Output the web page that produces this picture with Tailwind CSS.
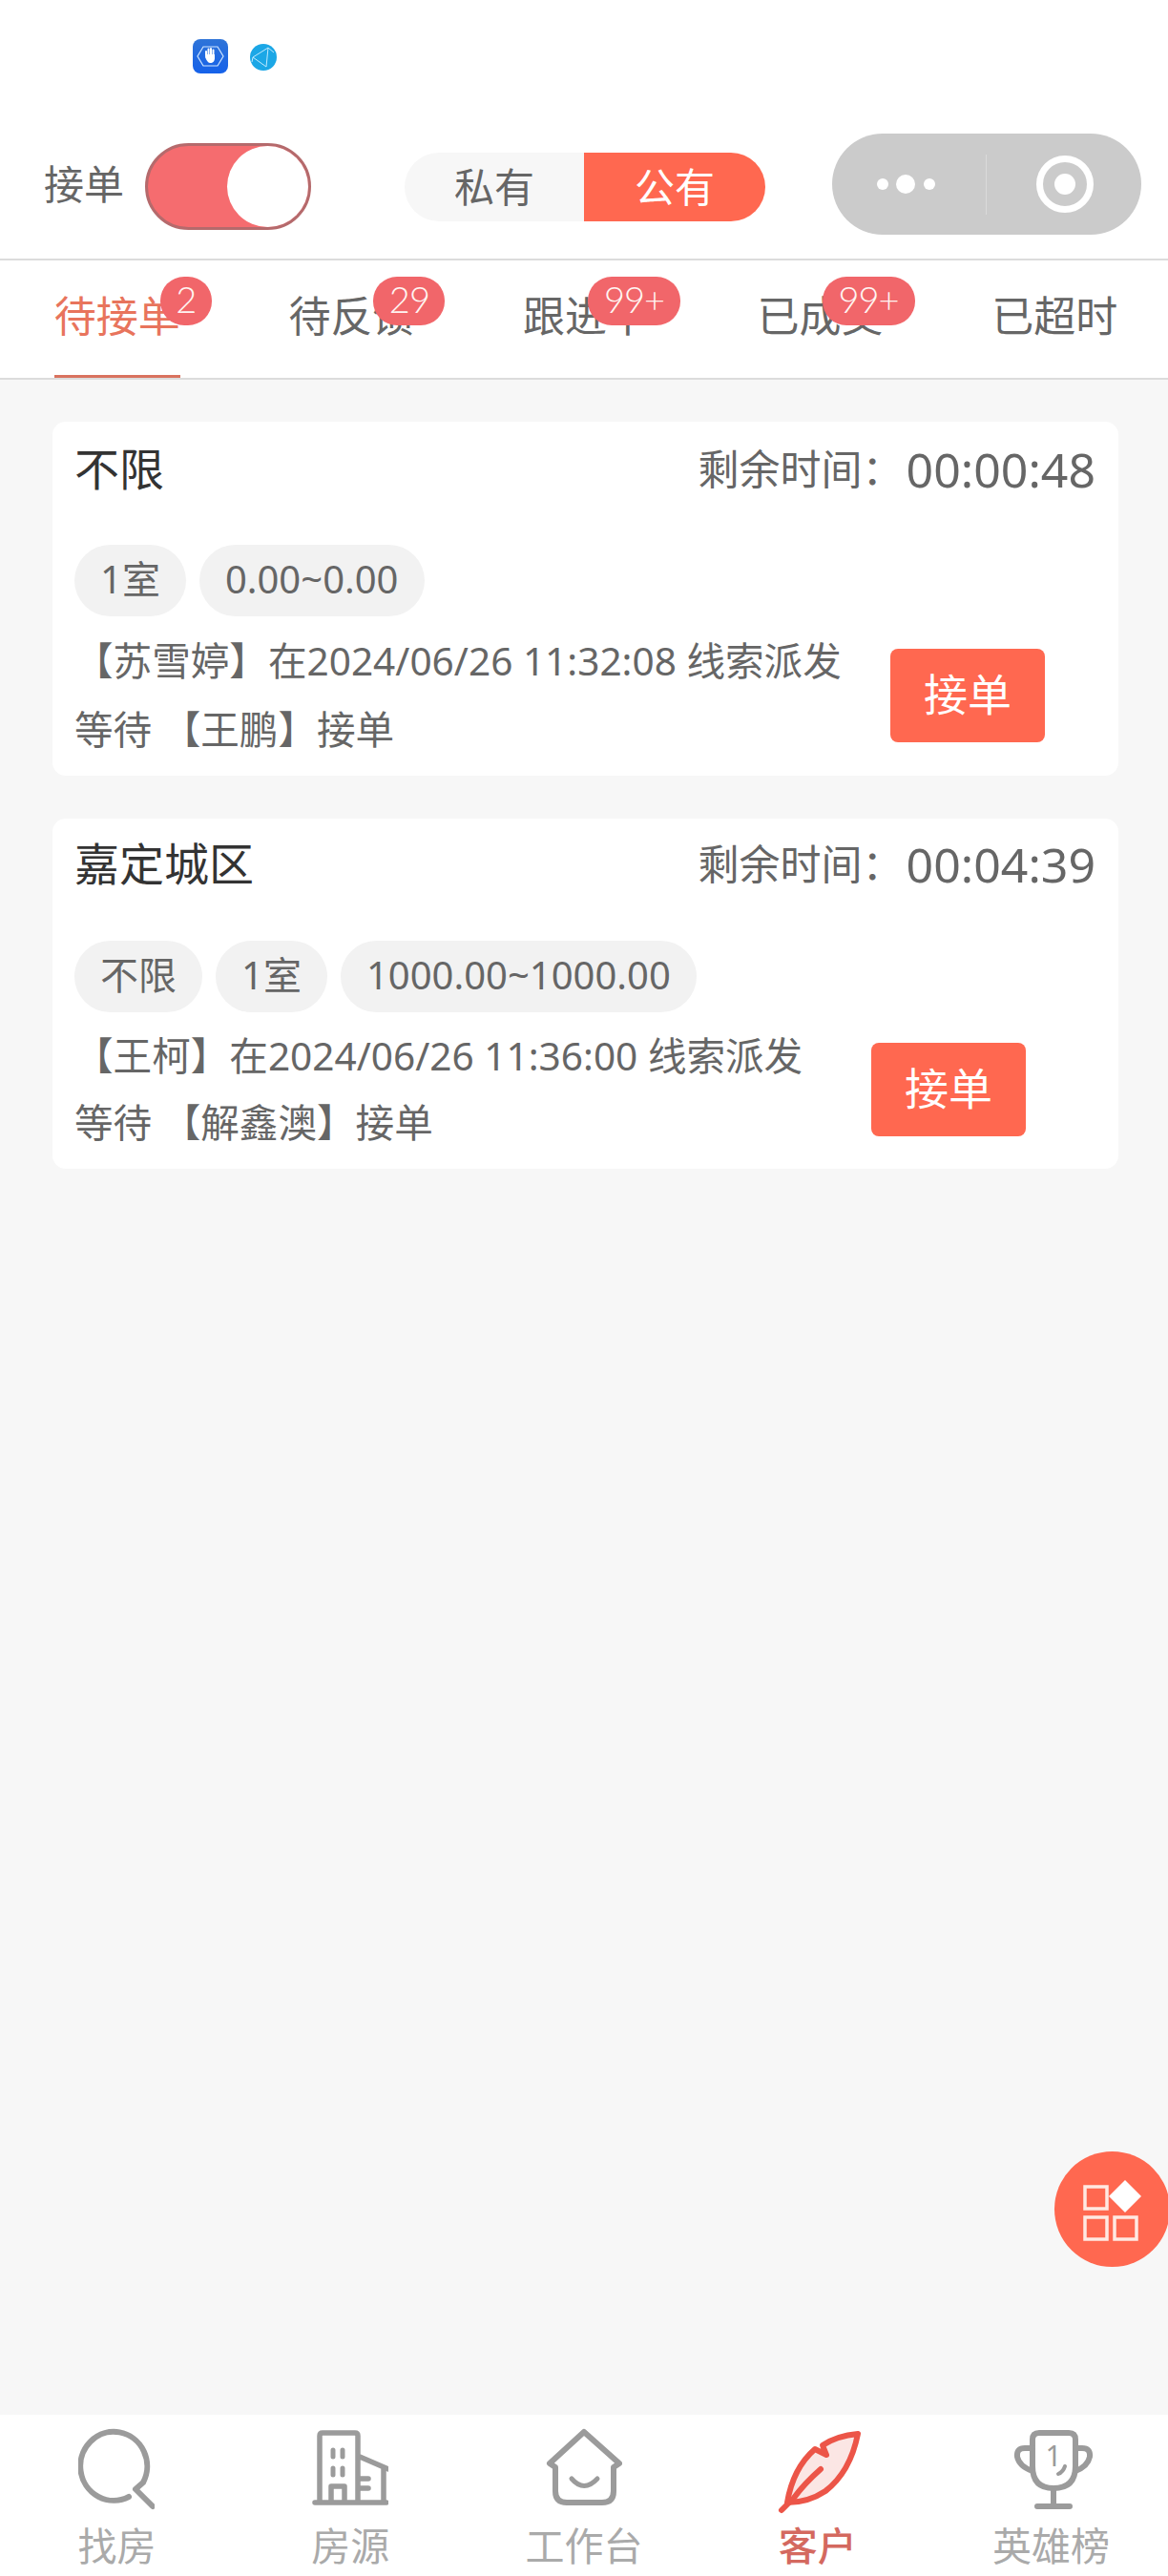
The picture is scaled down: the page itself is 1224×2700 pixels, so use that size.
<!DOCTYPE html>
<html lang="zh-CN">
<head>
    <meta charset="UTF-8">
    <meta name="viewport" content="width=device-width, initial-scale=1.0">
    <title>客户</title>
    <script src="https://cdn.jsdelivr.net/npm/@tailwindcss/browser@4"></script>
</head>
<body class="bg-[#f7f7f7]">
<div class="relative flex h-[2700px] w-[1224px] flex-col overflow-hidden text-[#666666] [font-family:'Noto_Sans','Noto_Sans_CJK_SC',sans-serif]">

    <!-- Header -->
    <div class="h-[273px] shrink-0 border-b-2 border-[#dcdcdc] bg-white">
        <div class="flex h-[140px] items-start pl-[202px] pt-[41px]">
            <svg class="h-[36px] w-[37px]" viewBox="0 0 37 36">
                <defs>
                    <linearGradient id="appBlue" x1="0" y1="0" x2="0" y2="1">
                        <stop offset="0" stop-color="#2f74d8"/>
                        <stop offset="1" stop-color="#1561ea"/>
                    </linearGradient>
                </defs>
                <rect width="37" height="36" rx="8" fill="url(#appBlue)"/>
                <path d="M11 8H26L32 18L26 28H11L5 18Z" fill="none" stroke="#cfe6ff" stroke-width="1.2"/>
                <path d="M14 17V13M16.5 17V10.5M19 17V10M21.5 17V11.5" stroke="#fff" stroke-width="2" stroke-linecap="round"/>
                <path d="M13.500 16H23V20C23 23 21 25 18.500 25C16 25 15 23 13 19Z" fill="#fff"/>
            </svg>
            <svg class="ml-[23px] mt-[5px] h-[28px] w-[28px]" viewBox="0 0 28 28">
                <circle cx="14" cy="14" r="14" fill="#1ba7e6"/>
                <path d="M19 4L3 14L17 24L19 4M19 4L25 9M3 14L2 19" fill="none" stroke="#bfeaff" stroke-width="1"/>
            </svg>
        </div>
        <div class="flex h-[106px] items-center pl-[46px]">
            <span class="w-[84px] text-[42px] leading-[50px]">接单</span>
            <div class="ml-[22px] mt-[4px] flex h-[91px] w-[174px] items-center justify-end rounded-full border-[3px] border-[#b56a6c] bg-[#f56c6f]">
                <div class="h-[85px] w-[85px] rounded-full bg-white"></div>
            </div>
            <div class="ml-[98px] mt-[6px] flex h-[72px] w-[378px] overflow-hidden rounded-full text-[42px] leading-[72px]">
                <div class="w-[188px] bg-[#f7f7f7] text-center">私有</div>
                <div class="w-[190px] bg-[#ff6850] text-center text-white">公有</div>
            </div>
            <div class="relative ml-[70px] flex h-[106px] w-[324px] items-center rounded-full bg-[#cbcbcb]">
                <div class="ml-[47px] h-[12px] w-[12px] rounded-full bg-white"></div>
                <div class="ml-[8px] h-[20px] w-[20px] rounded-full bg-white"></div>
                <div class="ml-[9px] h-[12px] w-[12px] rounded-full bg-white"></div>
                <div class="ml-[53px] h-[63px] w-px bg-[#dadada]"></div>
                <div class="ml-[52px] flex h-[60px] w-[60px] items-center justify-center rounded-full border-[7px] border-white">
                    <div class="h-[22px] w-[22px] rounded-full bg-white"></div>
                </div>
            </div>
        </div>
    </div>

    <!-- Tabs -->
    <div class="grid h-[125px] w-[1228px] shrink-0 grid-cols-5 border-b-2 border-[#dcdcdc] bg-white pt-[36px] text-center text-[44px] leading-[44px]">
        <div><span class="relative inline-block text-[#e8745c]">待接单
            <span class="absolute left-[111px] top-[-19px] h-[51px] w-[54px] rounded-[25px] bg-[#f1666a] text-[38px] font-light leading-[46px] tracking-[-1px] text-[#fff5f2] [font-family:Lato,sans-serif]">2</span>
            <span class="absolute left-0 top-[84px] h-[3px] w-full bg-[#d9735f]"></span>
        </span></div>
        <div><span class="relative inline-block">待反馈
            <span class="absolute left-[89px] top-[-19px] h-[51px] w-[75px] rounded-[25px] bg-[#f1666a] text-[38px] font-light leading-[46px] tracking-[-1px] text-[#fff5f2] [font-family:Lato,sans-serif]">29</span>
        </span></div>
        <div><span class="relative inline-block">跟进中
            <span class="absolute left-[68px] top-[-19px] h-[51px] w-[97px] rounded-[25px] bg-[#f1666a] text-[38px] font-light leading-[46px] tracking-[-1px] text-[#fff5f2] [font-family:Lato,sans-serif]">99+</span>
        </span></div>
        <div><span class="relative inline-block">已成交
            <span class="absolute left-[68px] top-[-19px] h-[51px] w-[97px] rounded-[25px] bg-[#f1666a] text-[38px] font-light leading-[46px] tracking-[-1px] text-[#fff5f2] [font-family:Lato,sans-serif]">99+</span>
        </span></div>
        <div>已超时</div>
    </div>

    <!-- Order list -->
    <div class="flex flex-1 flex-col gap-[45px] pl-[55px] pr-[52px] pt-[44px]">
        <div class="rounded-[14px] bg-white pb-[12px] pl-[23px] pr-[24px] pt-[20px]">
            <div class="flex h-[60px] items-center justify-between">
                <span class="mt-[-2px] text-[47px] text-[#333333]">不限</span>
                <span class="flex items-center gap-[3px] text-[43px]">剩余时间：<span class="text-[50px]">00:00:48</span></span>
            </div>
            <div class="mt-[49px] flex gap-[14px] text-[40px] leading-[72px]">
                <span class="h-[75px] rounded-full bg-[#f2f2f2] px-[27px]">1室</span>
                <span class="h-[75px] rounded-full bg-[#f2f2f2] px-[27px]">0.00~0.00</span>
            </div>
            <div class="mt-[11px] flex items-center">
                <p class="w-[855px] whitespace-nowrap text-[40.6px] leading-[72px]">【苏雪婷】在2024/06/26 11:32:08 线索派发<br>等待 【王鹏】接单</p>
                <button class="h-[98px] w-[162px] rounded-[8px] bg-[#ff6850] pb-[3px] text-[46px] text-white">接单</button>
            </div>
        </div>

        <div class="rounded-[14px] bg-white pb-[13px] pl-[23px] pr-[24px] pt-[18px]">
            <div class="flex h-[60px] items-center justify-between">
                <span class="mt-[-2px] text-[47px] text-[#333333]">嘉定城区</span>
                <span class="flex items-center gap-[3px] text-[43px]">剩余时间：<span class="text-[50px]">00:04:39</span></span>
            </div>
            <div class="mt-[50px] flex gap-[14px] text-[40px] leading-[72px]">
                <span class="h-[75px] rounded-full bg-[#f2f2f2] px-[27px]">不限</span>
                <span class="h-[75px] rounded-full bg-[#f2f2f2] px-[27px]">1室</span>
                <span class="h-[75px] rounded-full bg-[#f2f2f2] px-[27px]">1000.00~1000.00</span>
            </div>
            <div class="mt-[11px] flex items-center">
                <p class="w-[835px] whitespace-nowrap text-[40.6px] leading-[70px]">【王柯】在2024/06/26 11:36:00 线索派发<br>等待 【解鑫澳】接单</p>
                <button class="h-[98px] w-[162px] rounded-[8px] bg-[#ff6850] pb-[3px] text-[46px] text-white">接单</button>
            </div>
        </div>
    </div>

    <!-- Floating button -->
    <div class="absolute left-[1105px] top-[2255px] h-[121px] w-[121px] rounded-full bg-[#ff6850]">
        <svg class="h-[121px] w-[121px]" viewBox="0 0 121 121" fill="none" stroke="#ffe9e2" stroke-width="3.500">
            <rect x="32" y="37" width="23" height="23"/>
            <rect x="32" y="69" width="23" height="23"/>
            <rect x="63" y="69" width="23" height="23"/>
            <path d="M74 30L91 47L74 64L57 47Z" fill="#ffffff" stroke="none"/>
        </svg>
    </div>

    <!-- Bottom nav -->
    <div class="grid h-[169px] shrink-0 grid-cols-5 bg-white pt-[14px] text-center text-[41px] leading-[40px] text-[#aaaaaa]">
        <div class="flex flex-col items-center">
            <svg class="h-[90px] w-[80px]" viewBox="0 0 80 90" fill="none" stroke="#9b9b9b" stroke-width="6" stroke-linecap="round" stroke-linejoin="round">
                <path d="M53 72A35 36 0 1 1 68 57L60 64L78 82"/>
            </svg>
            <span class="mt-[13px]">找房</span>
        </div>
        <div class="flex flex-col items-center">
            <svg class="h-[90px] w-[80px]" viewBox="0 0 80 90" fill="none" stroke="#9b9b9b" stroke-width="5.500" stroke-linecap="round" stroke-linejoin="round">
                <path d="M3 78H78M8 78V8Q8 5 11 5H45Q48 5 48 8V78M50 30L80 43M75 42V78M20 78V61H34V78M49 53H59M49 63H59"/>
                <path d="M22 23V30M32 23V30M22 42V49M32 42V49" stroke-width="5"/>
            </svg>
            <span class="mt-[13px]">房源</span>
        </div>
        <div class="flex flex-col items-center">
            <svg class="h-[90px] w-[80px]" viewBox="0 0 80 90" fill="none" stroke="#9b9b9b" stroke-width="6" stroke-linecap="round" stroke-linejoin="round">
                <path d="M40 4L4 37L10 41V66Q10 78 22 78H59Q71 78 71 66V41L77 37Z"/>
                <path d="M27 53Q40 68 54 53" stroke-width="5"/>
            </svg>
            <span class="mt-[13px]">工作台</span>
        </div>
        <div class="flex flex-col items-center font-medium text-[#d4695f]">
            <svg class="h-[90px] w-[80px] overflow-visible" viewBox="0 0 80 90" fill="none" stroke="#ec5548" stroke-width="6" stroke-linecap="round" stroke-linejoin="round">
                <path d="M82 6Q60 8 45 18L49 28L37 22Q14 42 8 78Q30 78 48 66Q74 46 82 6Z" fill="#fbe6e4"/>
                <path d="M2 86L15 73Q26 58 43 43"/>
            </svg>
            <span class="mt-[13px]">客户</span>
        </div>
        <div class="flex flex-col items-center">
            <svg class="h-[90px] w-[80px] overflow-visible" viewBox="0 0 80 90" fill="none" stroke="#9b9b9b" stroke-width="6" stroke-linecap="round" stroke-linejoin="round">
                <path d="M20 12Q20 5 27 5H58Q65 5 65 12V40Q65 63 42 63Q20 63 20 40Z"/>
                <path d="M20 21H12Q3 21 4 30Q6 40 20 45M65 21H72Q81 21 80 30Q78 40 65 45M42 63V81M25 82H59"/>
                <path d="M54 40Q52 46 47 48" stroke-width="4"/>
                <text x="42" y="40" text-anchor="middle" font-size="30" fill="#9b9b9b" stroke="none">1</text>
            </svg>
            <span class="mt-[13px]">英雄榜</span>
        </div>
    </div>
</div>
</body>
</html>
